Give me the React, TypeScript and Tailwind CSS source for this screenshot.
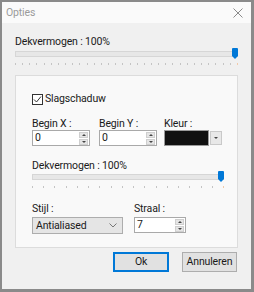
import React from 'react';

function Ticks({ count, width }: { count: number; width: number }) {
  return (
    <div className="flex justify-between h-[3px] mt-[4px]" style={{ width }}>
      {Array.from({ length: count }).map((_, i) => (
        <span
          key={i}
          className={`w-px h-[2px] ${i === count - 1 ? 'bg-[#f2c9a8]' : 'bg-[#c4c4c4]'}`}
        />
      ))}
    </div>
  );
}

function Slider({ width, ticks }: { width: number; ticks: number }) {
  return (
    <div style={{ width }}>
      <div className="relative h-[10px] flex items-center">
        <div className="w-full h-[6px] bg-[#e7e7e7] border border-[#d6d6d6]" />
        <svg
          className="absolute right-[0px] top-[-1px]"
          width="6"
          height="11"
          viewBox="0 0 6 11"
        >
          <path d="M0 1 Q0 0 1 0 H5 Q6 0 6 1 V8 L3 11 L0 8 Z" fill="#0078d7" />
        </svg>
      </div>
      <Ticks count={ticks} width={width} />
    </div>
  );
}

function Spinner() {
  return (
    <div className="flex flex-col gap-px w-[9px] h-[13px] mr-px">
      <div className="flex-1 bg-[#e5e5e5] border border-[#cfcfcf] flex items-center justify-center">
        <span className="block w-0 h-0 border-x-[2px] border-x-transparent border-b-[2px] border-b-[#444]" />
      </div>
      <div className="flex-1 bg-[#e5e5e5] border border-[#cfcfcf] flex items-center justify-center">
        <span className="block w-0 h-0 border-x-[2px] border-x-transparent border-t-[2px] border-t-[#444]" />
      </div>
    </div>
  );
}

function NumberBox({ value, width }: { value: string; width: number }) {
  return (
    <div
      className="h-[16px] border border-[#a9a9a9] bg-white flex items-center justify-between pl-[2px]"
      style={{ width }}
    >
      <span className="leading-none">{value}</span>
      <Spinner />
    </div>
  );
}

export default function App() {
  return (
    <div
      className="w-[254px] h-[292px] bg-[#8a8a8a] p-[2px] pr-[3px] pb-[3px] text-[10.5px] tracking-[-0.15px] text-[#1a1a1a]"
      style={{ fontFamily: '"Segoe UI", Roboto, sans-serif' }}
    >
      <div className="w-full h-full bg-[#f0f0f0] flex flex-col">
        <div className="h-[21px] bg-[#fafafa] flex items-center justify-between pl-[4px] pr-[8px]">
          <span className="text-[#9a9a9a]">Opties</span>
          <svg width="10" height="10" viewBox="0 0 10 10">
            <path d="M0.5 0.5 L9.5 9.5 M9.5 0.5 L0.5 9.5" stroke="#8a8a8a" strokeWidth="1" />
          </svg>
        </div>

        <div className="px-[13px] pt-[12px]">
          <div className="leading-[14px]">Dekvermogen : 100%</div>
          <Slider width={223} ticks={32} />

          <div className="mt-[9px] h-[173px] bg-[#f9f9f9] border border-[#dcdcdc] pl-[16px] pt-[16px]">
            <label className="flex items-center gap-[2px] leading-[14px]">
              <span className="w-[11px] h-[11px] border border-[#333] bg-white flex items-center justify-center">
                <svg width="9" height="9" viewBox="0 0 9 9">
                  <path d="M1 4.5 L3.5 7 L8 1.5" stroke="#333" strokeWidth="1" fill="none" />
                </svg>
              </span>
              <span>Slagschaduw</span>
            </label>

            <div className="flex mt-[11px]">
              <div className="w-[67px]">
                <div className="leading-[13px]">Begin X :</div>
                <NumberBox value="0" width={58} />
              </div>
              <div className="w-[65px]">
                <div className="leading-[13px]">Begin Y :</div>
                <NumberBox value="0" width={58} />
              </div>
              <div>
                <div className="leading-[13px]">Kleur :</div>
                <div className="flex items-center h-[16px]">
                  <div className="w-[45px] h-[16px] bg-[#111] border border-[#9a9a9a]" />
                  <div className="w-[12px] h-[14px] ml-px bg-[#e8e8e8] border border-[#c9c9c9] flex items-center justify-center">
                    <span className="block w-0 h-0 border-x-[2px] border-x-transparent border-t-[2px] border-t-[#444]" />
                  </div>
                </div>
              </div>
            </div>

            <div className="mt-[13px] leading-[13px]">Dekvermogen : 100%</div>
            <Slider width={192} ticks={18} />

            <div className="flex mt-[13px]">
              <div className="w-[102px]">
                <div className="leading-[14px]">Stijl :</div>
                <div className="mt-px w-[91px] h-[17px] bg-[#e5e5e5] border border-[#adadad] flex items-center justify-between pl-[3px] pr-[5px]">
                  <span>Antialiased</span>
                  <svg width="8" height="5" viewBox="0 0 8 5">
                    <path d="M0.5 0.5 L4 4 L7.5 0.5" stroke="#777" fill="none" />
                  </svg>
                </div>
              </div>
              <div>
                <div className="leading-[14px]">Straal :</div>
                <div className="mt-px">
                  <NumberBox value="7" width={52} />
                </div>
              </div>
            </div>
          </div>

          <div className="flex justify-end gap-[13px] mt-[4px] pr-[1px]">
            <button className="w-[56px] h-[20px] bg-[#e1e1e1] border border-[#0078d7] outline outline-1 outline-[#0078d7] -outline-offset-2">
              Ok
            </button>
            <button className="w-[55px] h-[20px] bg-[#e1e1e1] border border-[#adadad]">
              Annuleren
            </button>
          </div>
        </div>
      </div>
    </div>
  );
}
